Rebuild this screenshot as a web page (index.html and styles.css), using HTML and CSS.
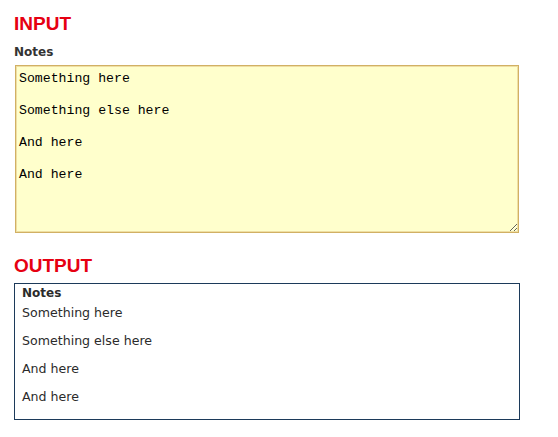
FILE: index.html
```html
<!DOCTYPE html>
<html>
<head>
<meta charset="utf-8">
<link rel="stylesheet" href="styles.css">
</head>
<body>
<div class="page">
  <h2 class="heading">INPUT</h2>
  <label class="label" for="notes">Notes</label>
  <textarea id="notes" class="notes-input">Something here

Something else here

And here

And here</textarea>

  <h2 class="heading heading-output">OUTPUT</h2>
  <div class="output-box">
    <div class="output-label">Notes</div>
    <div class="output-lines">
      <p class="output-line">Something here</p>
      <p class="output-line">Something else here</p>
      <p class="output-line">And here</p>
      <p class="output-line">And here</p>
    </div>
  </div>
</div>
</body>
</html>
```

FILE: styles.css
```css
html, body {
  margin: 0;
  padding: 0;
  background: #ffffff;
}

.page {
  padding: 13px 0 0 14px;
  width: 506px;
  display: flex;
  flex-direction: column;
}

.heading {
  margin: 0;
  font-family: "Liberation Sans", Arial, sans-serif;
  font-weight: bold;
  font-size: 19px;
  line-height: 22px;
  color: #e60012;
}

.heading-output {
  margin-top: 22px;
}

.label {
  display: block;
  margin-top: 10px;
  font-family: "DejaVu Sans", Verdana, sans-serif;
  font-weight: bold;
  font-size: 12px;
  line-height: 14px;
  color: #333333;
}

.notes-input {
  display: block;
  box-sizing: border-box;
  margin: 6px 0 0 1px;
  width: 504px;
  height: 168px;
  padding: 5px 3px 3px 3px;
  border: 1px solid #d1b064;
  box-shadow: inset 0 0 0 1px #efdfa3;
  background: #ffffcc;
  font-family: "Liberation Mono", "Courier New", monospace;
  font-size: 13.2px;
  line-height: 16px;
  color: #000000;
  outline: none;
}

.output-box {
  box-sizing: border-box;
  margin-top: 6px;
  width: 506px;
  height: 137px;
  border: 1px solid #1c3a5a;
  padding: 2px 7px 15px 7px;
  font-family: "DejaVu Sans", Verdana, sans-serif;
  color: #2b2b2b;
}

.output-label {
  font-weight: bold;
  font-size: 12px;
  line-height: 14px;
  color: #2b2b2b;
}

.output-lines {
  margin-top: 6px;
  display: flex;
  flex-direction: column;
  gap: 14px;
}

.output-line {
  margin: 0;
  font-size: 12.6px;
  line-height: 14px;
}
```
